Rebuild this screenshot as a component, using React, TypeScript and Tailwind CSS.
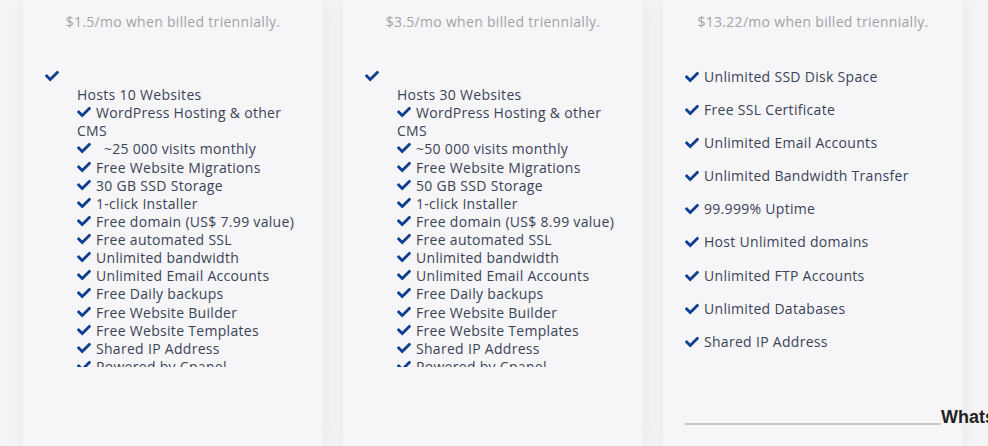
import React from "react";
import { FaCheck } from "react-icons/fa";

const Check = () => (
  <FaCheck className="inline-block shrink-0 text-[#0c3d93]" size={14} />
);

const Item = ({ text, extra }: { text: string; extra?: boolean }) => (
  <div className="leading-[18.13px]">
    <FaCheck className="inline-block align-[-1px] text-[#0c3d93]" size={14} />
    <span className={extra ? "ml-[9px]" : "ml-[5px]"}>{text}</span>
  </div>
);

const items = (visits: string, storage: string, domain: string, extraSpace: boolean) => [
  { t: "WordPress Hosting & other CMS" },
  { t: visits, extra: extraSpace },
  { t: "Free Website Migrations" },
  { t: storage },
  { t: "1-click Installer" },
  { t: domain },
  { t: "Free automated SSL" },
  { t: "Unlimited bandwidth" },
  { t: "Unlimited Email Accounts" },
  { t: "Free Daily backups" },
  { t: "Free Website Builder" },
  { t: "Free Website Templates" },
  { t: "Shared IP Address" },
  { t: "Powered by Cpanel" },
];

const PlanCard = ({
  price,
  sites,
  list,
}: {
  price: string;
  sites: string;
  list: { t: string; extra?: boolean }[];
}) => (
  <div className="w-[300px] shrink-0 bg-[#f6f6f9] shadow-[0_0_18px_rgba(0,0,0,0.07)] h-[446px]">
    <div className="pt-[12px] text-center text-[14px] leading-[20px] tracking-[0.3px] text-[#a3a3a3]">{price}</div>
    <div className="pl-[22px] mt-[36px] h-[16px] flex items-center">
      <Check />
    </div>
    <div className="pl-[54px] pr-[16px] mt-[2px] h-[281px] overflow-hidden text-[14px] tracking-[0.3px] text-[#3a4356]">
      <div className="leading-[18.13px]">{sites}</div>
      {list.map((it, i) => (
        <Item key={i} text={it.t} extra={it.extra} />
      ))}
    </div>
  </div>
);

const card3 = [
  "Unlimited SSD Disk Space",
  "Free SSL Certificate",
  "Unlimited Email Accounts",
  "Unlimited Bandwidth Transfer",
  "99.999% Uptime",
  "Host Unlimited domains",
  "Unlimited FTP Accounts",
  "Unlimited Databases",
  "Shared IP Address",
];

export default function App() {
  return (
    <div
      className="w-[988px] h-[446px] overflow-hidden bg-[#f5f5f7] flex gap-[20px] pl-[23px]"
      style={{ fontFamily: '"Open Sans", "Noto Sans", sans-serif' }}
    >
      <PlanCard
        price="$1.5/mo when billed triennially."
        sites="Hosts 10 Websites"
        list={items(" ~25 000 visits monthly", "30 GB SSD Storage", "Free domain (US$ 7.99 value)", true)}
      />
      <PlanCard
        price="$3.5/mo when billed triennially."
        sites="Hosts 30 Websites"
        list={items("~50 000 visits monthly", "50 GB SSD Storage", "Free domain (US$ 8.99 value)", false)}
      />
      <div className="w-[300px] shrink-0 bg-[#f6f6f9] shadow-[0_0_18px_rgba(0,0,0,0.07)] h-[446px] relative">
        <div className="pt-[12px] text-center text-[14px] leading-[20px] tracking-[0.3px] text-[#a3a3a3]">
          $13.22/mo when billed triennially.
        </div>
        <div className="pl-[22px] mt-[36px] flex flex-col gap-[15.1px] text-[14px] tracking-[0.3px] text-[#3a4356]">
          {card3.map((t) => (
            <div key={t} className="flex items-center gap-[5px] leading-[18px]">
              <Check />
              <span>{t}</span>
            </div>
          ))}
        </div>
        <div className="absolute left-[22px] top-[408px] flex items-end whitespace-nowrap">
          <div className="w-[256px] h-[2px] bg-[#cacace] mb-[1px]" />
          <span
            className="text-[18px] font-bold leading-[18px] text-[#222]"
            style={{ fontFamily: '"Liberation Sans", Arial, sans-serif' }}
          >
            WhatsApp
          </span>
        </div>
      </div>
    </div>
  );
}
